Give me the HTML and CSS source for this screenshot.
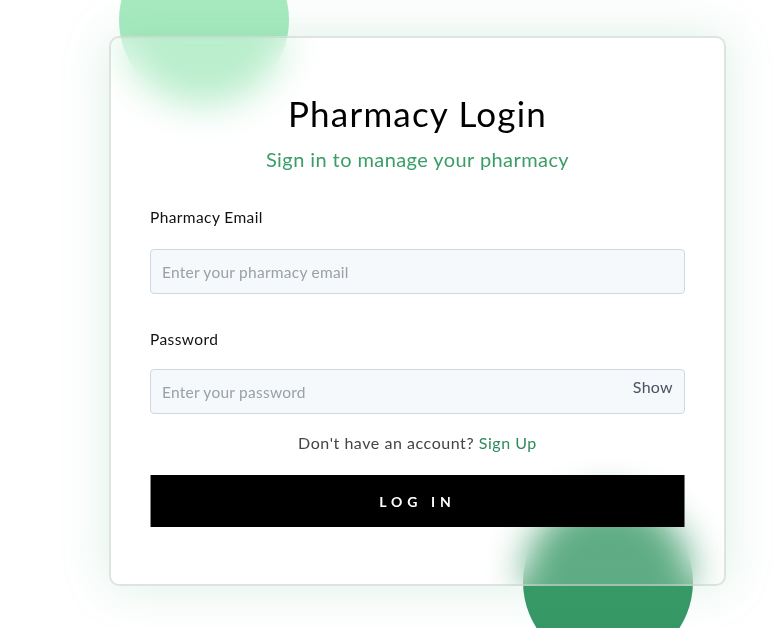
FILE: index.html
```html
<!DOCTYPE html>
<html>
	<head>
		<meta charset="utf-8"/>
		<title>Pharmacy Login</title>
		<link rel="stylesheet" href="styles.css">
	</head>
	<body>
		<div class="scene">
			<!-- decorative blobs behind the card -->
			<div class="blob blob-light"></div>
			<div class="blob blob-dark"></div>

			<form class="card">
				<h1 class="title">Pharmacy Login</h1>
				<p class="subtitle">Sign in to manage your pharmacy</p>

				<label class="label" for="email">Pharmacy Email</label>
				<input class="field" id="email" type="email" placeholder="Enter your pharmacy email" />

				<label class="label label-pass" for="password">Password</label>
				<div class="pass-wrap">
					<input class="field" id="password" type="password" placeholder="Enter your password" />
					<span class="show">Show</span>
				</div>

				<p class="signup">Don't have an account? <a href="#">Sign Up</a></p>

				<button class="btn" type="button">LOG IN</button>
			</form>
		</div>
	</body>
</html>
```

FILE: styles.css
```css
/* reset */
* {
	margin: 0;
	padding: 0;
	box-sizing: border-box;
}

body {
	background-color: #fff;
	font-family: "Lato", "Noto Sans", sans-serif;
	overflow: hidden;
}

.scene {
	position: relative;
	width: 773px;
	height: 628px;
	padding-top: 36px;
	padding-left: 109px;
	overflow: hidden;
}

/* circles */
.blob {
	position: absolute;
	width: 170px;
	height: 170px;
	border-radius: 50%;
}

.blob-light {
	left: 119px;
	top: -65px;
	background-color: #a9eac0;
}

.blob-dark {
	left: 523px;
	top: 497px;
	background-color: #379866;
}

.card {
	position: relative;
	display: flex;
	flex-direction: column;
	width: 617px;
	height: 550px;
	padding: 54px 39px 0;
	background-color: rgba(255, 255, 255, 0.2);
	backdrop-filter: blur(18px);
	border: 2px solid rgba(200, 210, 205, 0.6);
	border-radius: 10px;
	box-shadow: 0 0 50px rgba(60, 170, 110, 0.18);
}

.title {
	font-size: 35px;
	font-weight: 400;
	line-height: 42px;
	letter-spacing: 1.2px;
	text-align: center;
	color: #000;
}

.subtitle {
	margin-top: 13px;
	font-size: 20px;
	line-height: 24px;
	letter-spacing: 0.42px;
	text-align: center;
	color: #3a9d68;
}

.label {
	margin-top: 37px;
	margin-bottom: 23px;
	font-size: 15.5px;
	line-height: 18px;
	letter-spacing: 0.4px;
	color: #111;
}

.label-pass {
	margin-top: 36px;
	margin-bottom: 21px;
}

.field {
	display: block;
	width: 100%;
	height: 45px;
	padding: 0 11px;
	background-color: #f5f9fc;
	border: 1px solid #cfd8e1;
	border-radius: 4px;
	font-family: inherit;
	font-size: 15.5px;
	letter-spacing: 0.25px;
	color: #333;
	outline: none;
}

.field::placeholder {
	color: #9aa0a6;
}

.pass-wrap {
	position: relative;
}

.show {
	position: absolute;
	top: 8px;
	right: 12px;
	font-size: 16px;
	letter-spacing: 0.3px;
	color: #4a5260;
	cursor: pointer;
}

.signup {
	margin-top: 19px;
	font-size: 16px;
	line-height: 19px;
	letter-spacing: 0.55px;
	text-align: center;
	color: #444;
}

.signup a {
	color: #2f8a5c;
	text-decoration: none;
}

.btn {
	margin-top: 23px;
	height: 52px;
	background-color: #000;
	border: none;
	border-left: 1px solid #888;
	border-right: 1px solid #777;
	font-family: inherit;
	font-size: 14px;
	font-weight: 700;
	letter-spacing: 5px;
	color: #fff;
	cursor: pointer;
}
```
